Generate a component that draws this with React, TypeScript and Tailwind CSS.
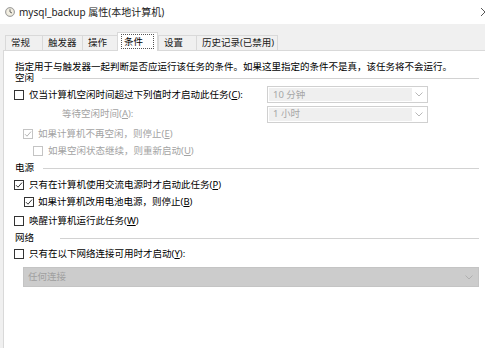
import React from 'react';

const Box = ({ checked, disabled }: { checked?: boolean; disabled?: boolean }) => (
  <span
    className={
      disabled
        ? 'w-[10px] h-[10px] border border-[#c4c4c4] bg-white flex items-center justify-center shrink-0'
        : 'w-[10px] h-[10px] border border-[#333333] bg-white flex items-center justify-center shrink-0'
    }
  >
    {checked && (
      <svg width="8" height="8" viewBox="0 0 8 8">
        <polyline
          points="1,4.2 3,6.2 7,1.6"
          fill="none"
          stroke={disabled ? '#b4b4b4' : '#333333'}
          strokeWidth="1"
        />
      </svg>
    )}
  </span>
);

const Key = ({ k }: { k: string }) => (
  <>
    (<span className="underline underline-offset-1">{k}</span>)
  </>
);

const Chevron = ({ color }: { color: string }) => (
  <svg width="8" height="5" viewBox="0 0 8 5">
    <polyline points="0.5,0.5 4,4 7.5,0.5" fill="none" stroke={color} strokeWidth="1" />
  </svg>
);

const Combo = ({ value }: { value: string }) => (
  <div className="w-[161px] h-[17px] border border-[#d0d0d0] bg-white flex p-px shrink-0">
    <div className="flex-1 bg-[#efefef] flex items-center pl-[4px] text-[#a6a6a6]">{value}</div>
    <div className="w-[14px] flex items-center justify-center">
      <Chevron color="#b8b8b8" />
    </div>
  </div>
);

const Section = ({ label, lw }: { label: string; lw: string }) => (
  <div className="flex items-center h-full">
    <span className={lw}>{label}</span>
    <span className="flex-1 h-px bg-[#d2d2d2]" />
  </div>
);

const tabs = [
  { t: '常规', w: 'w-[37px]' },
  { t: '触发器', w: 'w-[40px]' },
  { t: '操作', w: 'w-[35px]' },
  { t: '条件', w: 'w-[41px]', sel: true },
  { t: '设置', w: 'w-[38px]' },
  { t: '历史记录(已禁用)', w: 'w-[81px]' },
];

export default function App() {
  return (
    <div className="w-[485px] h-[348px] bg-[#f0f0f0] overflow-hidden font-['Noto_Sans','Noto_Sans_CJK_SC',sans-serif] text-[9.5px] leading-none text-black">
      {/* title bar */}
      <div className="h-[24px] bg-white flex items-center pl-[5px] overflow-hidden">
        <svg width="10" height="10" viewBox="0 0 10 10" className="shrink-0">
          <circle cx="5" cy="5" r="4.5" fill="#d9d6cc" stroke="#8f8f8f" strokeWidth="0.8" />
          <circle cx="5" cy="5" r="3.3" fill="#f3efe2" />
          <polyline points="5,2.3 5,5 7,6" fill="none" stroke="#555" strokeWidth="0.9" />
        </svg>
        <span className="ml-[4px] text-[10px] text-[#222]">mysql_backup 属性(本地计算机)</span>
        <svg width="10" height="10" viewBox="0 0 10 10" className="ml-auto mr-[-5px] shrink-0">
          <path d="M1 1 L9 9 M9 1 L1 9" stroke="#444" strokeWidth="0.9" />
        </svg>
      </div>

      {/* tabs */}
      <div className="h-[26px] flex items-end pl-[5px]">
        {tabs.map((tab) =>
          tab.sel ? (
            <div
              key={tab.t}
              className={`${tab.w} h-[19px] bg-white border border-b-0 border-[#d9d9d9] -mb-px relative z-10 flex items-start pt-[1px] px-[3px]`}
            >
              <div className="w-full h-[15px] border border-dotted border-[#555] flex items-center pl-[2px]">
                {tab.t}
              </div>
            </div>
          ) : (
            <div
              key={tab.t}
              className={`${tab.w} h-[15px] border border-b-0 border-r-0 border-[#d9d9d9] flex items-center pl-[5px] text-[#1a1a1a]`}
            >
              {tab.t}
            </div>
          )
        )}
        <div className="w-px h-[15px] bg-[#d9d9d9]" />
      </div>

      {/* panel */}
      <div className="ml-[3px] h-[298px] bg-white border-l border-t border-[#d9d9d9] pl-[10px] pr-[6px] pt-[10px]">
        <div className="h-[11px] flex items-center pl-px">
          指定用于与触发器一起判断是否应运行该任务的条件。如果这里指定的条件不是真，该任务将不会运行。
        </div>
        <div className="h-[12px] pl-px">
          <Section label="空闲" lw="w-[27px]" />
        </div>

        <div className="h-[17px] mt-[2px] flex items-center">
          <Box />
          <span className="ml-[5px] w-[238px] shrink-0">
            仅当计算机空闲时间超过下列值时才启动此任务<Key k="C" />:
          </span>
          <Combo value="10 分钟" />
        </div>
        <div className="h-[18px] mt-[2px] flex items-center">
          <span className="ml-[48px] w-[205px] shrink-0 text-[#a3a3a3]">
            等待空闲时间<Key k="A" />:
          </span>
          <Combo value="1 小时" />
        </div>
        <div className="h-[17px] mt-[2px] flex items-center pl-[9px] text-[#a3a3a3]">
          <Box checked disabled />
          <span className="ml-[5px]">
            如果计算机不再空闲，则停止<Key k="E" />
          </span>
        </div>
        <div className="h-[18px] flex items-center pl-[19px] text-[#a3a3a3]">
          <Box disabled />
          <span className="ml-[5px]">
            如果空闲状态继续，则重新启动<Key k="U" />
          </span>
        </div>

        <div className="h-[16px] pl-px">
          <Section label="电源" lw="w-[28px]" />
        </div>
        <div className="h-[17px] flex items-center">
          <Box checked />
          <span className="ml-[5px]">
            只有在计算机使用交流电源时才启动此任务<Key k="P" />
          </span>
        </div>
        <div className="h-[18px] flex items-center pl-[10px]">
          <Box checked />
          <span className="ml-[4px]">
            如果计算机改用电池电源，则停止<Key k="B" />
          </span>
        </div>
        <div className="h-[20px] flex items-center">
          <Box />
          <span className="ml-[5px]">
            唤醒计算机运行此任务<Key k="W" />
          </span>
        </div>

        <div className="h-[14px] pl-px">
          <Section label="网络" lw="w-[45px]" />
        </div>
        <div className="h-[18px] flex items-center">
          <Box />
          <span className="ml-[5px]">
            只有在以下网络连接可用时才启动<Key k="Y" />:
          </span>
        </div>
        <div className="mt-[4px] ml-[9px] h-[20px] bg-[#cccccc] border border-[#c4c4c4] flex items-center pl-[4px] pr-[5px] text-[#a0a0a0]">
          <span className="flex-1">任何连接</span>
          <Chevron color="#b0b0b0" />
        </div>
      </div>
    </div>
  );
}
